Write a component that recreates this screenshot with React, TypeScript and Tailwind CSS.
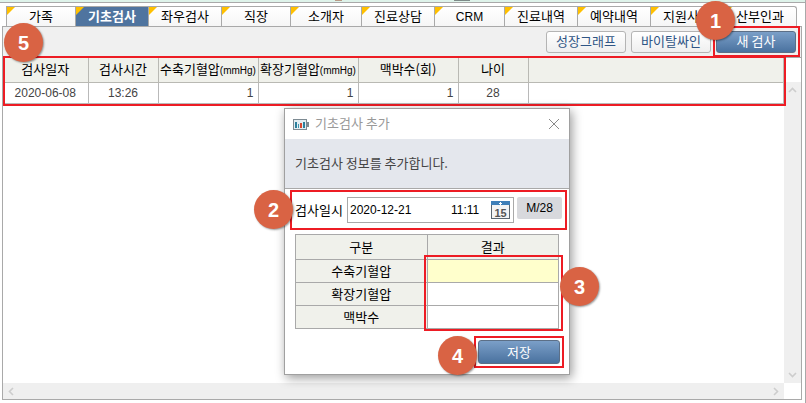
import React from 'react';
import clsx from 'clsx';

const TABS = [
    { label: '가족', width: 'w-[69px]' },
    { label: '기초검사', width: 'w-[73px]' },
    { label: '좌우검사', width: 'w-[73px]' },
    { label: '직장', width: 'w-[69px]' },
    { label: '소개자', width: 'w-[71px]' },
    { label: '진료상담', width: 'w-[73px]' },
    { label: 'CRM', width: 'w-[70px]' },
    { label: '진료내역', width: 'w-[73px]' },
    { label: '예약내역', width: 'w-[73px]' },
    { label: '지원사업', width: 'w-[73px]' },
    { label: '산부인과', width: 'w-[74px]' },
];

const COLUMNS = [
    { label: '검사일자', value: '2020-06-08', width: 'w-[85px]', align: 'text-center' },
    { label: '검사시간', value: '13:26', width: 'w-[70px]', align: 'text-center' },
    { label: '수축기혈압', unit: '(mmHg)', value: '1', width: 'w-[100px]', align: 'text-right' },
    { label: '확장기혈압', unit: '(mmHg)', value: '1', width: 'w-[100px]', align: 'text-right' },
    { label: '맥박수(회)', value: '1', width: 'w-[100px]', align: 'text-right' },
    { label: '나이', value: '28', width: 'w-[70px]', align: 'text-center' },
    { label: '', value: '', width: '', align: '' },
];

const FIELDS = [
    { id: 'systolic', label: '수축기혈압', bg: 'bg-[#ffffcc]' },
    { id: 'diastolic', label: '확장기혈압', bg: 'bg-white' },
    { id: 'pulse', label: '맥박수', bg: 'bg-white' },
];

const LATIN = 'font-["Liberation_Sans",sans-serif] text-xs';
const BUTTON = 'h-[22px] w-20 rounded-[3px] border pb-0.5';
const LIGHT = 'border-[#b4b4b4] bg-linear-to-b from-white to-[#efefef] text-[#2f5585]';
const BLUE = 'border-[#5c6f87] bg-linear-to-b from-[#7b9fc8] to-[#4a729f] text-white';

// Numbered marker that sits over the screen
const Marker: React.FC<{ n: number; className: string }> = ({ n, className }) => (
    <div
        className={clsx(
            'absolute z-20 flex size-[39px] items-center justify-center rounded-full bg-[#d96344] font-["Liberation_Sans",sans-serif] text-xl font-bold text-white shadow-[1px_1px_2px_rgba(0,0,0,0.4)]',
            className
        )}
    >
        {n}
    </div>
);

// Red frame around the part that a marker points at
const Frame: React.FC<{ className: string }> = ({ className }) => (
    <div className={clsx('pointer-events-none absolute z-10 border-2 border-[#ed1c24]', className)} />
);

const Arrow: React.FC<{ d: string }> = ({ d }) => (
    <svg width="9" height="9" viewBox="0 0 9 9" fill="none" stroke="#cdcdcd" strokeWidth="1.6">
        <path d={d} />
    </svg>
);

const TitleIcon = () => (
    <svg width="16" height="11" viewBox="0 0 16 11">
        <rect x="0.5" y="0.5" width="13" height="10" fill="#e3edf2" stroke="#7d8a92" />
        <rect x="14" y="3" width="2" height="5" fill="#7d8a92" />
        <rect x="2" y="3" width="2" height="6" fill="#2c7f9c" />
        <rect x="5" y="5" width="1" height="4" fill="#3d96b0" />
        <rect x="7" y="4" width="2" height="5" fill="#d8472f" />
        <rect x="10" y="3" width="2" height="6" fill="#2c7f9c" />
    </svg>
);

const CalendarIcon = () => (
    <svg width="19" height="18" viewBox="0 0 19 18">
        <rect x="0.5" y="0.5" width="18" height="17" fill="#f4f4f4" stroke="#5b6670" />
        <rect x="0" y="0" width="19" height="4" fill="#3f7fb8" />
        <path d="M9.5 1v3M8 2.5h3" stroke="#fff" />
        <text x="9.5" y="15.5" textAnchor="middle" fontSize="11" fontWeight="bold" fontFamily="Liberation Sans, sans-serif" fill="#555">
            15
        </text>
    </svg>
);

const TabBar = () => (
    <nav className="flex h-5 pr-2 pl-1.5">
        {TABS.map((tab, i) => {
            const active = i === 1;
            return (
                <button
                    key={tab.label}
                    type="button"
                    className={clsx(
                        'relative shrink border-t border-l border-[#a9a9a9] whitespace-nowrap',
                        tab.width,
                        active ? 'bg-[#4f749f] font-bold text-white' : 'bg-linear-to-b from-white to-[#f6f6f6]',
                        tab.label === 'CRM' ? LATIN : 'pb-0.5',
                        i === TABS.length - 1 && 'rounded-tr-[3px] border-r'
                    )}
                >
                    <svg className="absolute top-0 left-0" width="8" height="8" viewBox="0 0 8 8">
                        <path d="M0 0h8L0 8z" fill="#ffc000" />
                    </svg>
                    {tab.label}
                </button>
            );
        })}
    </nav>
);

const ResultTable = () => (
    <table className="w-full table-fixed border-collapse">
        <thead>
            <tr className="h-6">
                {COLUMNS.map((col, i) => (
                    <th key={i} className={clsx('border-r border-b border-[#b9b9b3] bg-[#f0f1eb] p-0 pb-0.5 font-normal whitespace-nowrap', col.width)}>
                        {col.label}
                        {col.unit && <span className='font-["Liberation_Sans",sans-serif] text-[10px] leading-none'>{col.unit}</span>}
                    </th>
                ))}
            </tr>
        </thead>
        <tbody>
            <tr className="h-[21px] text-[#444]">
                {COLUMNS.map((col, i) => (
                    <td key={i} className={clsx('border-r border-b border-[#b9b9b9] px-1 py-0', LATIN, col.align)}>
                        {col.value}
                    </td>
                ))}
            </tr>
        </tbody>
    </table>
);

const AddDialog = () => (
    <section
        role="dialog"
        aria-labelledby="dialog-title"
        className="absolute top-[108px] left-[284px] z-10 w-[286px] border border-[#a0a0a0] bg-white shadow-[2px_3px_10px_rgba(0,0,0,0.4)]"
    >
        <header className="flex h-[30px] items-center px-2">
            <TitleIcon />
            <h2 id="dialog-title" className="ml-1.5 flex-1 pb-0.5 text-[#999]">기초검사 추가</h2>
            <button type="button" aria-label="닫기" className="mr-px">
                <svg width="12" height="12" viewBox="0 0 12 12" stroke="#8a8a8a" fill="none">
                    <path d="M1 1l10 10M11 1L1 11" />
                </svg>
            </button>
        </header>
        <p className="flex h-[50px] items-center border-b border-[#a9a9a9] bg-[#e4e7ed] px-2.5 pb-0.5 text-[#444]">기초검사 정보를 추가합니다.</p>

        <div className="relative mt-px mr-0.5 ml-[5px] flex h-10 items-center px-[5px]">
            <label htmlFor="exam-date" className="w-[52px]">검사일시</label>
            <div className={clsx('flex h-[26px] flex-1 items-center border border-[#a9a9a9] pr-[3px] pl-0.5', LATIN)}>
                <input id="exam-date" defaultValue="2020-12-21" className="w-[101px] outline-none" />
                <input aria-label="시간" defaultValue="11:11" className="w-0 flex-1 outline-none" />
                <button type="button" aria-label="달력"><CalendarIcon /></button>
            </div>
            <span className={clsx('mb-1 ml-[3px] flex h-[22px] w-[45px] items-center justify-center rounded-[2px] bg-[#d8d9dd]', LATIN)}>M/28</span>
            <Frame className="inset-0" />
            <Marker n={2} className="top-0 -left-9" />
        </div>

        <div className="relative mx-2.5 mt-1">
            <table className="w-full border-collapse border border-[#a9a9a9]">
                <thead>
                    <tr className="h-[25px] bg-[#f0f1eb]">
                        <th className="w-1/2 border border-[#a9a9a9] p-0 font-normal">구분</th>
                        <th className="w-1/2 border border-[#a9a9a9] p-0 font-normal">결과</th>
                    </tr>
                </thead>
                <tbody>
                    {FIELDS.map((field) => (
                        <tr key={field.id} className="h-[23px]">
                            <th className="border border-[#a9a9a9] bg-[#f0f1eb] p-0 font-normal">
                                <label htmlFor={field.id}>{field.label}</label>
                            </th>
                            <td className={clsx('border border-[#a9a9a9] p-0', field.bg)}>
                                <input id={field.id} className="block w-full px-1 outline-none" />
                            </td>
                        </tr>
                    ))}
                </tbody>
            </table>
            <Frame className="top-[21px] -right-1 -bottom-0.5 left-[129px]" />
            <Marker n={3} className="top-[33px] -right-10" />
        </div>

        <div className="flex justify-end px-1 pt-1 pb-[3px]">
            <div className="relative mt-[3px] mr-px mb-[3px] p-1">
                <button type="button" className={clsx('block h-6 w-[82px] rounded-[3px] border', BLUE)}>저장</button>
                <Frame className="inset-0" />
                <Marker n={4} className="top-0 -left-9" />
            </div>
        </div>
    </section>
);

export default function App() {
    return (
        <div className='relative flex min-h-screen flex-col border-r border-[#a9a9a9] bg-white pb-[3px] font-["Noto_Sans_CJK_KR",sans-serif] text-[13px] leading-4 text-black'>
            {/* lower edge of the toolbar above, with the feet of its icons */}
            <div className="mb-[3px] flex h-[3px] border-b border-[#a9a9a9] bg-[#def3ea] pl-[335px]">
                <span className="h-px w-[7px] bg-[#b99a86]" />
                <span className="ml-28 h-px w-4 bg-[#7d8a88]" />
            </div>
            <TabBar />
            <main className="mr-[3px] ml-0.5 flex flex-1 flex-col border border-[#a9a9a9]">
                <div className="relative flex h-[31px] items-center justify-end gap-[5px] border-b border-[#a9a9a9] bg-[#f0f0f0] pr-[5px]">
                    <button type="button" className={clsx(BUTTON, LIGHT)}>성장그래프</button>
                    <button type="button" className={clsx(BUTTON, LIGHT)}>바이탈싸인</button>
                    <button type="button" className={clsx(BUTTON, BLUE)}>새 검사</button>
                    <Frame className="-top-px right-px bottom-0 w-[87px]" />
                    <Marker n={1} className="-top-[26px] right-[66px]" />
                    <Marker n={5} className="-top-1 left-px" />
                </div>
                <div className="flex flex-1">
                    <div className="flex-1">
                        <div className="relative">
                            <ResultTable />
                            <Frame className="-top-0.5 -right-0.5 -bottom-0.5 left-0" />
                        </div>
                    </div>
                    <div className="mt-6 flex w-[17px] flex-col items-center justify-between bg-[#efefef] py-1">
                        <Arrow d="M1 6l3.500-3.500L8 6" />
                        <Arrow d="M1 3l3.500 3.500L8 3" />
                    </div>
                </div>
                <div className="mr-[17px] flex h-4 items-center justify-between bg-[#efefef] px-1">
                    <Arrow d="M6 1L2.500 4.500L6 8" />
                    <Arrow d="M3 1l3.500 3.500L3 8" />
                </div>
            </main>
            <AddDialog />
        </div>
    );
}
